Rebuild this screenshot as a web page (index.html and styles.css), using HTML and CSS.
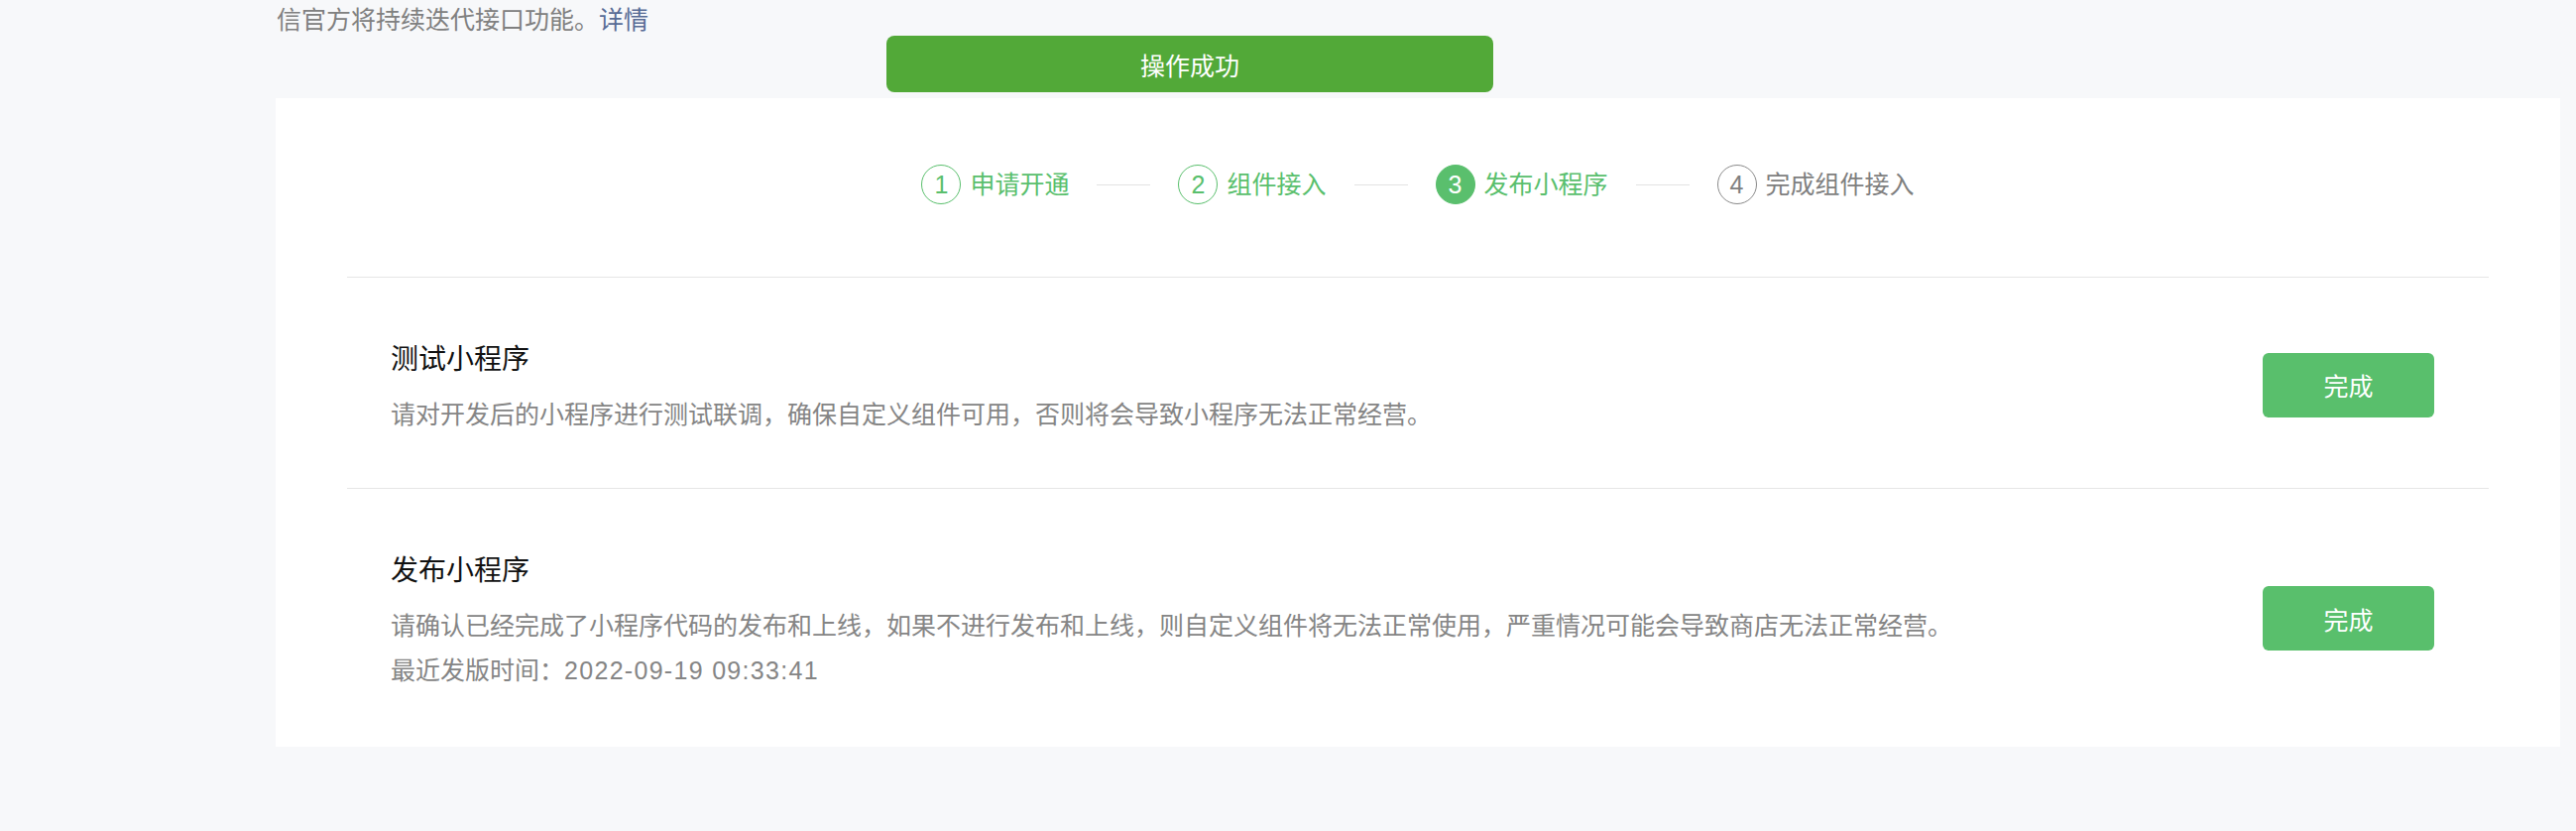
FILE: index.html
```html
<!DOCTYPE html>
<html lang="zh-CN">
<head>
<meta charset="utf-8">
<title>发布小程序</title>
<link rel="stylesheet" href="styles.css">
</head>
<body>
<div class="page">
  <p class="notice">信官方将持续迭代接口功能。<a class="link" href="#">详情</a></p>
  <div class="card">
    <div class="steps">
      <div class="step done"><span class="num">1</span><span class="label">申请开通</span></div>
      <span class="sep"></span>
      <div class="step done"><span class="num">2</span><span class="label">组件接入</span></div>
      <span class="sep"></span>
      <div class="step active"><span class="num">3</span><span class="label">发布小程序</span></div>
      <span class="sep"></span>
      <div class="step todo"><span class="num">4</span><span class="label">完成组件接入</span></div>
    </div>
    <div class="section">
      <div class="info">
        <h3 class="title">测试小程序</h3>
        <p class="desc">请对开发后的小程序进行测试联调，确保自定义组件可用，否则将会导致小程序无法正常经营。</p>
      </div>
      <button class="btn">完成</button>
    </div>
    <div class="section">
      <div class="info">
        <h3 class="title">发布小程序</h3>
        <p class="desc">请确认已经完成了小程序代码的发布和上线，如果不进行发布和上线，则自定义组件将无法正常使用，严重情况可能会导致商店无法正常经营。</p>
        <p class="desc">最近发版时间：<span class="time">2022-09-19 09:33:41</span></p>
      </div>
      <button class="btn">完成</button>
    </div>
  </div>
</div>
<div class="toast">操作成功</div>
</body>
</html>
```

FILE: styles.css
```css
* { box-sizing: border-box; }
html, body {
  margin: 0;
  padding: 0;
  background: #f7f8fa;
  font-family: "Liberation Sans", "Noto Sans CJK SC", sans-serif;
}
.page {
  padding: 0 16px 0 278px;
}
.notice {
  margin: 0;
  font-size: 25px;
  line-height: 41px;
  color: #808080;
  padding-left: 1px;
}
.link {
  color: #576b95;
  text-decoration: none;
}
.card {
  margin-top: 58px;
  background: #fff;
  padding: 0 72px 3px;
}
.steps {
  display: flex;
  align-items: center;
  justify-content: center;
  padding: 67px 0 73px;
}
.step {
  display: flex;
  align-items: center;
  font-size: 25px;
  color: #5abf6d;
}
.num {
  width: 40px;
  height: 40px;
  border-radius: 50%;
  border: 1px solid #5abf6d;
  display: flex;
  align-items: center;
  justify-content: center;
  margin-right: 9px;
  font-size: 25px;
  font-weight: 300;
}
.step.active .num {
  background: #5abf6d;
  color: #fff;
}
.step.todo {
  color: #7f7f7f;
}
.step.todo .num {
  border-color: #8a8a8a;
}
.label {
  line-height: 40px;
}
.sep {
  width: 54px;
  height: 1px;
  background: #e3e3e3;
  margin: 0 28px;
}
.section {
  display: flex;
  align-items: center;
  justify-content: space-between;
  border-top: 1px solid #e6e6e6;
  padding: 63px 55px 51px 44px;
}
.title {
  margin: 0;
  font-size: 28px;
  line-height: 40px;
  font-weight: 400;
  color: #111;
}
.desc {
  margin: 0;
  font-size: 25px;
  line-height: 45px;
  color: #858585;
}
.title + .desc {
  margin-top: 13px;
}
.time {
  letter-spacing: 1.3px;
}
.btn {
  width: 173px;
  height: 65px;
  border: 0;
  border-radius: 6px;
  background: #59bf6c;
  color: #fff;
  font-family: inherit;
  font-size: 25px;
  margin-bottom: 8px;
  padding: 0;
}
.toast {
  position: absolute;
  top: 36px;
  left: 894px;
  width: 612px;
  height: 57px;
  border-radius: 8px;
  background: #52a938;
  color: #fff;
  font-size: 25px;
  display: flex;
  align-items: center;
  justify-content: center;
}
```
